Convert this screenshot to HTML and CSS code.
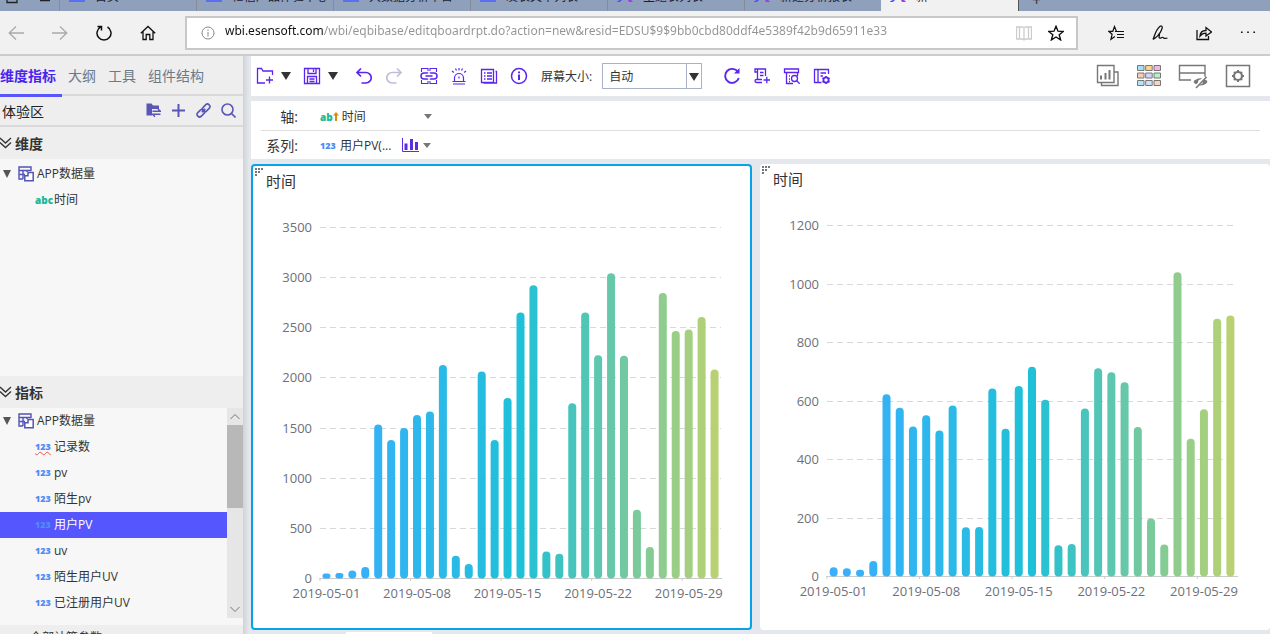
FILE: index.html
```html
<!doctype html>
<html lang="zh-CN">
<head>
	<meta charset="UTF-8">
	<title>APP数据量</title>
	<link rel="stylesheet" href="styles.css">
	<script src="chart.js" defer></script>
</head>
<body>
<svg class="defs" aria-hidden="true">
	<symbol id="i-table" viewBox="0 0 16 16">
		<path d="M5 13H1V1h12v4M1 4.500h12M1 8.500h6M5 4.500V13M9 4.500V6" fill="none" stroke="currentColor" stroke-width="1.400"/>
		<path d="M10 6.500h5.200v8.200H6.800v-5H10z" fill="#fff" stroke="currentColor" stroke-width="1.500"/>
	</symbol>
	<symbol id="i-fold" viewBox="0 0 12 12">
		<path d="M0 1l5.500 5L11 1M0 5.500l5.500 5 5.500-5" fill="none" stroke="currentColor" stroke-width="1.300"/>
	</symbol>
	<symbol id="i-drag" viewBox="0 0 8 8">
		<path d="M0 0h2v2H0zM3 0h2v2H3zM6 0h2v2H6zM0 3h2v2H0zM3 3h2v2H3zM0 6h2v2H0z" fill="currentColor"/>
	</symbol>
	<symbol id="i-page" viewBox="0 0 16 11">
		<path d="M0 0h16v2H0z" fill="#5b6ff5"/>
	</symbol>
	<symbol id="i-petal" viewBox="0 0 16 11">
		<path d="M0 1.500L2.500 0H5L3 2H0z" fill="#4a55ff"/><path d="M11 0h3l2 1.500-1 .5h-3z" fill="#9a3cf0"/>
	</symbol>
</svg>

<div class="tabs">
	<div class="tab first"><svg width="52" height="4"><path d="M7 0v2.500h10V0M40 .500h10" fill="none" stroke="#222" stroke-width="1.300"/></svg></div>
	<div class="tab"><svg class="fav"><use href="#i-page"/></svg><span>首页-</span></div>
	<div class="tab"><svg class="fav"><use href="#i-page"/></svg><span>亿信产品体验中心</span></div>
	<div class="tab"><svg class="fav"><use href="#i-page"/></svg><span>大数据分析平台</span></div>
	<div class="tab"><svg class="fav"><use href="#i-page"/></svg><span>发表文章列表</span></div>
	<div class="tab"><svg class="fav"><use href="#i-petal"/></svg><span>主题表列表</span></div>
	<div class="tab"><svg class="fav"><use href="#i-petal"/></svg><span>新建分析报表</span></div>
	<div class="tab on"><svg class="fav"><use href="#i-petal"/></svg><span>新</span></div>
	<div class="newtab">+</div>
</div>

<div class="browser">
	<div class="nav">
		<button aria-label="后退" class="dim"><svg width="16" height="16" viewBox="0 0 16 16"><path d="M16 8H1M8 1.500L1.200 8 8 14.500"/></svg></button>
		<button aria-label="前进" class="dim"><svg width="16" height="16" viewBox="0 0 16 16"><path d="M0 8h15M8 1.500L14.800 8 8 14.500"/></svg></button>
		<button aria-label="刷新"><svg width="16" height="16" viewBox="0 0 16 16"><path d="M4.500 2A7 7 0 1 0 11.500 2M1.500 1.500h4v4" stroke-width="1.500"/></svg></button>
		<button aria-label="主页"><svg width="16" height="16" viewBox="0 0 16 16"><path d="M.8 8.200L8 1.500l7.200 6.700M3 6.500v8h3.200V9.500h3.600v5H13v-8" stroke-width="1.300"/></svg></button>
	</div>
	<div class="address">
		<svg class="info" width="14" height="14" viewBox="0 0 14 14"><circle cx="7" cy="7" r="6"/><path d="M7 6v4.500M7 3.500V5"/></svg>
		<input class="url" type="text" aria-label="地址" value="wbi.esensoft.com/wbi/eqbibase/editqboardrpt.do?action=new&amp;resid=EDSU$9$9bb0cbd80ddf4e5389f42b9d65911e33">
		<button aria-label="阅读视图" class="faint"><svg width="16" height="16" viewBox="0 0 16 16"><path d="M.5 2h6L8 3l1.500-1h6v12h-6L8 15l-1.500-1h-6zM8 3v12M3.500 2v11.500M12.500 2v11.500"/></svg></button>
		<button aria-label="收藏"><svg width="16" height="16" viewBox="0 0 16 16"><path d="M8 1.300l2 4.900 5.200.3-4 3.300 1.400 5.100L8 12l-4.600 2.900 1.400-5.100-4-3.300 5.200-.3z" stroke-width="1.400"/></svg></button>
	</div>
	<div class="actions">
		<button aria-label="收藏夹"><svg width="16" height="16" viewBox="0 0 16 16"><path d="M8.500 6.500L6.500 1.500l-1.700 4.800H.7l3.400 3-1.200 5 4-2.700M7 6.500h9M9 9.500h7M9 12.500h7" stroke-width="1.200"/></svg></button>
		<button aria-label="笔记"><svg width="16" height="16" viewBox="0 0 16 16"><path d="M1 14.500L3.500 8C5 4 8 .5 9.500 1s.5 3-1 6-4.300 5.500-7.500 7.500M7 8.500c1.500 1-1 3.500.5 4.500s2-1.500 3.500-.5 2 1.500 4.500.5" stroke-width="1.300"/></svg></button>
		<button aria-label="共享"><svg width="16" height="16" viewBox="0 0 16 16"><path d="M1 5v9.500h11.500V11M4 11c.3-4 3-5.500 6-5.500V2.500L15.500 7 10 11V8.200C7 8.200 5.500 9 4 11z" stroke-width="1.300"/></svg></button>
		<button aria-label="更多"><svg width="16" height="16" viewBox="0 0 16 16"><path d="M1 7.300h1.600M7.200 7.300h1.600M13.400 7.300H15" stroke-width="1.600"/></svg></button>
	</div>
</div>

<div class="app">
	<div class="side">
		<div class="sidetabs">
			<a href="#" class="active">维度指标</a>
			<a href="#">大纲</a>
			<a href="#">工具</a>
			<a href="#">组件结构</a>
		</div>
		<div class="source">
			<span>体验区</span>
			<button aria-label="切换主题"><svg width="15" height="15" viewBox="0 0 15 15"><path d="M.5.500h5L7 2.500h6V6H6v6.500H.5z" fill="currentColor" stroke="none"/><path d="M6.500 8.200h8L12 6M14.500 11.200h-8L9 13.800" stroke-width="1.400"/></svg></button>
			<button aria-label="新建"><svg width="15" height="15" viewBox="0 0 15 15"><path d="M7.500 1v13M1 7.500h13" stroke-width="2"/></svg></button>
			<button aria-label="关联"><svg width="15" height="15" viewBox="0 0 15 15"><g transform="rotate(-45 7.500 7.500)"><rect x="-.5" y="5" width="8.500" height="5" rx="2.500"/><rect x="7" y="5" width="8.500" height="5" rx="2.500"/><path d="M5 7.500h5"/></g></svg></button>
			<button aria-label="搜索"><svg width="15" height="15" viewBox="0 0 15 15"><circle cx="6.500" cy="6.500" r="5.500"/><path d="M10.500 10.500l4 4"/></svg></button>
		</div>
		<div class="head"><svg width="12" height="12"><use href="#i-fold"/></svg>维度</div>
		<ul class="tree dims">
			<li class="root"><i class="tri"></i><svg width="16" height="16"><use href="#i-table"/></svg>APP数据量</li>
			<li><b class="abc">abc</b>时间</li>
		</ul>
		<div class="head"><svg width="12" height="12"><use href="#i-fold"/></svg>指标</div>
		<div class="scroll">
			<ul class="tree">
				<li class="root"><i class="tri"></i><svg width="16" height="16"><use href="#i-table"/></svg>APP数据量</li>
				<li><b class="num wavy">123</b>记录数</li>
				<li><b class="num">123</b>pv</li>
				<li><b class="num">123</b>陌生pv</li>
				<li class="sel"><b class="num">123</b>用户PV</li>
				<li><b class="num">123</b>uv</li>
				<li><b class="num">123</b>陌生用户UV</li>
				<li><b class="num">123</b>已注册用户UV</li>
			</ul>
			<div class="bar">
				<svg width="16" height="17" viewBox="0 0 16 17"><path d="M3.500 11L8 6.500l4.500 4.500"/></svg>
				<div class="thumb"></div>
				<svg width="16" height="17" viewBox="0 0 16 17"><path d="M3.500 6L8 10.500 12.500 6"/></svg>
			</div>
		</div>
		<div class="head last"><span>全部计算参数</span></div>
	</div>

	<div class="main">
		<div class="toolbar">
			<div class="drop">
				<button aria-label="新建"><svg width="18" height="18" viewBox="0 0 18 18"><path d="M9 16H1.500V1.500h4L7 4h9.500v4M10 13h7M13.500 9.500v7"/></svg></button>
				<button aria-label="新建选项" class="arrow"><i class="tri"></i></button>
			</div>
			<div class="drop">
				<button aria-label="保存"><svg width="18" height="18" viewBox="0 0 18 18"><path d="M1.500 1.500h15v15h-15zM5 1.500v5h8v-5M10.500 2.500V5M4.500 16.500v-7h9v7M6.500 12h5M6.500 14.500h5"/></svg></button>
				<button aria-label="保存选项" class="arrow"><i class="tri"></i></button>
			</div>
			<div class="set undo">
				<button aria-label="撤销"><svg width="18" height="18" viewBox="0 0 18 18"><path d="M6 1.500l-4 4 4 4M2 5.500h9a5 5 0 0 1 0 10.500H6.500" stroke-width="1.700"/></svg></button>
				<button aria-label="重做" class="off"><svg width="18" height="18" viewBox="0 0 18 18"><path d="M12 1.500l4 4-4 4M16 5.500H7A5 5 0 0 0 7 16h4.500" stroke-width="1.700"/></svg></button>
			</div>
			<div class="set tools">
				<button aria-label="联动"><svg width="18" height="18" viewBox="0 0 18 18"><path d="M8 4V1.500H1.500V5M10 4V1.500h6.500V5M8 14v2.500H1.500V13M10 14v2.500h6.500V13" stroke-width="1.100"/><path d="M7.500 6.500V6H4a3 3 0 0 0 0 6h3.500v-.5M10.500 6.500V6H14a3 3 0 0 1 0 6h-3.500v-.5M5.500 9h7" stroke-width="1.500"/></svg></button>
				<button aria-label="预警"><svg width="18" height="18" viewBox="0 0 18 18"><path d="M4.500 14V11a4.500 4.500 0 0 1 9 0v3M2.500 14.500h13M3 17h12M9 1v2.500M5.500 1.500l1 2M12.500 1.500l-1 2M2 4l1.800 1.500M16 4l-1.800 1.500M9 9.500v2" stroke-width="1.200"/></svg></button>
				<button aria-label="列表"><svg width="18" height="18" viewBox="0 0 18 18"><path d="M1.500 2.500h12v13h-12zM15.500 4.500h1V16H3.500M4 6h1.500M7 6h5M4 9h1.500M7 9h5M4 12h1.500M7 12h5"/></svg></button>
				<button aria-label="信息"><svg width="18" height="18" viewBox="0 0 18 18"><circle cx="9" cy="9" r="7.500" stroke-width="1.500"/><path d="M9 7.500V13M9 4.500v1.800" stroke-width="2"/></svg></button>
			</div>
			<label for="screen">屏幕大小:</label>
			<div class="select"><select id="screen"><option>自动</option></select></div>
			<div class="set">
				<button aria-label="刷新"><svg width="18" height="18" viewBox="0 0 18 18"><path d="M15 5a7 7 0 1 0 .8 6" stroke-width="1.900"/><path d="M16.500 1v5.500H11z" fill="currentColor" stroke="none"/></svg></button>
				<button aria-label="添加脚本"><svg width="18" height="18" viewBox="0 0 18 18"><path d="M4.500 5H2V2h10.500v7M4.500 2v10.500M9 15.500H3.500a1.500 1.500 0 0 1 0-3H9M7 5.500h3.500M7 8.500h3.500M10.500 13H17M13.800 9.800v6.400"/></svg></button>
				<button aria-label="预览"><svg width="18" height="18" viewBox="0 0 18 18"><path d="M3.500 5.500H1.500V2h14v3.500h-12V16.500H10M14.500 6v3M6 9h1M6 12h1M6 14.500h1"/><circle cx="11.500" cy="11.500" r="3"/><path d="M13.700 13.700l3 3"/></svg></button>
				<button aria-label="设置"><svg width="18" height="18" viewBox="0 0 18 18"><path d="M8.500 15.500h-7v-13h14V7M5 2.500v13M7.500 6H13M7.500 9H10"/><circle cx="13" cy="13" r="2.600" stroke-width="1.800"/><path d="M13 9v1.500M13 15.500V17M9.500 11l1.300.8M15.200 14.200l1.300.8M9.500 15l1.300-.8M15.200 11.800l1.300-.8" stroke-width="1.600"/></svg></button>
			</div>
			<div class="right">
				<button aria-label="图表"><svg width="24" height="24" viewBox="0 0 24 24"><path d="M1.500 1.500h16.500v17H1.500zM18.500 8H22v13.500H5.500V19" stroke-width="1.400"/><path d="M5 15.500v-4M9.500 15.500V9M13.500 15.500V6" stroke-width="2"/></svg></button>
				<button aria-label="主题颜色"><svg class="palette" width="24" height="24" viewBox="0 0 24 24"><path fill="#a9dff5" d="M.5 1.500h6.500v5H.5z"/><path fill="#f8d98a" d="M8.700 1.500h6.500v5H8.700z"/><path fill="#f4b6e6" d="M17 1.500h6.500v5H17z"/><path fill="#f8cdb6" d="M.5 9h6.500v5H.5z"/><path fill="#d6d4fa" d="M8.700 9h6.500v5H8.700z"/><path fill="#b9f0cc" d="M17 9h6.500v5H17z"/><path fill="#b6e4f7" d="M.5 16.500h6.500v5H.5z"/><path fill="#cfe0fa" d="M8.700 16.500h6.500v5H8.700z"/><path fill="#f9d3c0" d="M17 16.500h6.500v5H17z"/></svg></button>
				<button aria-label="隐藏面板"><svg width="30" height="26" viewBox="0 0 30 26"><path d="M13 17H1.500V2.500H27V10H1.500M27 10v5" stroke-width="1.400"/><path d="M15.500 19c3-5 11-5 14 0-3 4.500-11 4.500-14 0z" fill="currentColor" stroke="none"/><circle cx="22.500" cy="19" r="2.400" fill="#fff" stroke="none"/><path d="M27 14L17 25" stroke="#fff" stroke-width="3"/><path d="M28.500 14L18 25" stroke-width="1.600"/></svg></button>
				<button aria-label="选项"><svg width="26" height="24" viewBox="0 0 26 24"><path d="M1.500 1.500h23v21h-23z" stroke-width="1.500"/><circle cx="13" cy="12" r="4" stroke-width="2.200"/><path d="M13 6v2M13 16v2M7 12h2M17 12h2M9 8l1.300 1.300M15.700 14.700L17 16M17 8l-1.300 1.300M10.300 14.700L9 16" stroke-width="2"/></svg></button>
			</div>
		</div>

		<div class="axes">
			<div class="axis">
				<span class="name">轴:</span><b class="abc">ab</b><svg class="sort" width="6" height="9" viewBox="0 0 6 9"><path d="M3 0l3 3.500H4V9H2V3.500H0z" fill="#dc8a10"/></svg><span class="val">时间</span><i class="caret"></i>
			</div>
			<div class="axis">
				<span class="name">系列:</span><b class="num">123</b><span class="val">用户PV(...</span><svg class="kind" width="17" height="14" viewBox="0 0 17 14"><path d="M.5 0v13.500H17" fill="none" stroke="#5b2be8"/><path d="M2.500 5.500h3V12h-3zM8 1h3v11H8zM13 4h3v8h-3z" fill="#5b2be8"/></svg><i class="caret"></i>
			</div>
		</div>

		<div class="board">
			<div class="card active">
				<h3>时间</h3>
				<svg class="drag"><use href="#i-drag"/></svg>
				<div class="chart" id="chart1"></div>
			</div>
			<div class="card">
				<h3>时间</h3>
				<svg class="drag"><use href="#i-drag"/></svg>
				<div class="chart" id="chart2"></div>
			</div>
		</div>
		<div class="sheets"><span class="sheet"></span></div>
	</div>
</div>
</body>
</html>
```
FILE: styles.css
```css
body,ul,h3{margin:0;padding:0;}
body{
	height:100vh;
	display:flex;
	flex-direction:column;
	overflow:hidden;
	font-family:"Open Sans","Noto Sans CJK SC",sans-serif;
	font-size:12px;
	color:#333;
	background:#e4e8ec;
}
*{box-sizing:border-box;}
li{list-style:none;}
a{text-decoration:none;}
svg{display:block;flex:none;}
button{
	display:block;
	padding:0;
	border:none;
	background:none;
	color:inherit;
	flex:none;
}
button svg{fill:none;stroke:currentColor;stroke-width:1.3;}
.defs{display:none;}

/* tab strip */
.tabs{
	height:11px;
	display:flex;
	overflow:hidden;
	background:#8fa0bc;
}
.tab{
	flex:0 0 137px;
	display:flex;
	gap:10px;
	padding-left:9px;
	border-left:1px solid #8a8a92;
	overflow:hidden;
	font-size:12px;
	line-height:16px;
	color:#1c2230;
}
.tab.first{flex-basis:59px;padding:0;border:none;}
.tab span{margin-top:-11px;}
.tab.on{background:#f1f1f1;border:none;}
.fav{width:16px;height:11px;}
.newtab{
	padding-left:13px;
	border-left:1px solid #555;
	font-size:16px;
	line-height:0;
}

/* address row */
.browser{
	flex:none;
	height:45px;
	display:flex;
	align-items:center;
	background:#f1f1f1;
	border-bottom:2px solid #ccc;
	color:#111;
}
.nav{
	display:flex;
	gap:28px;
	padding:0 29px 0 8px;
}
.dim{color:#aaa;}
.address{
	flex:1;
	height:34px;
	display:flex;
	align-items:center;
	gap:16px;
	padding:0 12px 0 14px;
	background:#fff;
	border:2px solid #c8c8c8;
}
.info{fill:none;stroke:#888;}
.url{
	flex:1;
	min-width:0;
	margin-left:-6px;
	padding:0 0 4px;
	border:none;
	outline:none;
	font:12px "Noto Sans",sans-serif;
	/* host dark, path grey */
	color:transparent;
	background:linear-gradient(90deg,#111 98px,#939393 98px);
	-webkit-background-clip:text;
	background-clip:text;
}
.faint{color:#ccc;}
.actions{
	display:flex;
	gap:28px;
	padding:0 14px 0 30px;
}

.app{
	flex:1;
	min-height:0;
	display:flex;
}

/* sidebar */
.side{
	flex:0 0 243px;
	display:flex;
	flex-direction:column;
	overflow:hidden;
	background:#eee;
}
.sidetabs{
	flex:none;
	height:40px;
	display:flex;
	gap:12px;
	border-bottom:2px solid #d9d9d9;
	font-size:14px;
	line-height:40px;
}
.sidetabs a{color:#6b7a8b;height:41px;}
.sidetabs .active{
	padding-right:6px;
	margin-right:-6px;
	font-weight:bold;
	color:#4a25f0;
	border-bottom:3px solid #5855ff;
}
.source{
	flex:none;
	height:31px;
	display:flex;
	align-items:center;
	gap:10px;
	padding:0 7px 0 2px;
	border-bottom:2px solid #d9d9d9;
	font-size:14px;
	color:#222;
}
.source span{flex:1;}
.source button{color:#5957b5;}
.source svg{stroke-width:1.6;}
.head{
	flex:none;
	height:32px;
	display:flex;
	align-items:center;
	gap:3px;
	font-size:14px;
	font-weight:bold;
}
.tree li{
	height:26px;
	display:flex;
	align-items:center;
	padding-left:35px;
	line-height:26px;
}
.tree .root{padding-left:3px;}
.root svg{margin:0 3px 0 7px;color:#5354b4;}
.dims{
	flex:1;
	padding-top:2px;
	background:#f7f7f7;
}
.tri{
	border:4px solid transparent;
	border-top:8px solid #555;
	border-bottom:none;
}
.num,.abc{
	flex:0 0 19px;
	font-size:9px;
	font-weight:800;
	line-height:12px;
	color:#4e8cf8;
}
.abc{font-size:10px;color:#1bb895;}
.wavy{text-decoration:underline wavy #f05050 1px;}
.tree .sel{background:#5656ff;color:#fff;}
.scroll{
	flex:none;
	height:217px;
	display:flex;
	padding-bottom:7px;
	background:#f7f7f7;
}
.scroll ul{flex:1;}
.bar{
	width:16px;
	display:flex;
	flex-direction:column;
	background:#e6e6e6;
}
.bar svg{fill:none;stroke:#777;}
.thumb{height:83px;background:#b8b8b8;margin-bottom:auto;}
.last{
	height:9px;
	overflow:hidden;
	padding-left:30px;
	align-items:flex-start;
	font-size:12px;
	font-weight:normal;
	line-height:26px;
}

/* main */
.main{
	flex:1;
	min-width:0;
	display:flex;
	flex-direction:column;
	padding-left:8px;
	background:linear-gradient(90deg,#cfd2d6,#e4e8ec 6px);
}
.toolbar{
	flex:none;
	height:40px;
	display:flex;
	align-items:center;
	gap:12px;
	padding:0 19px 0 5px;
	background:#fff;
	color:#5a25ee;
}
.drop{display:flex;align-items:center;gap:7px;}
.arrow{width:10px;}
.arrow .tri{display:block;width:0;border-width:8px 5px 0;border-top-color:#333;}
.set{display:flex;gap:12px;}
.undo{padding:0 5px;}
.tools{margin-right:1px;}
.off{color:#c3bbdc;}
.toolbar label{color:#333;}
.select{
	position:relative;
	width:100px;
	margin:0 9px 0 -2px;
}
.select select{
	display:block;
	width:100%;
	height:26px;
	padding:0 6px;
	border:1px solid #a9b1c6;
	border-radius:0;
	background:#fff;
	appearance:none;
	font:inherit;
	color:#333;
}
.select:after{
	content:"";
	position:absolute;
	right:3px;
	top:10px;
	border:5px solid transparent;
	border-top:8px solid #333;
	border-bottom:none;
	pointer-events:none;
}
.select:before{
	content:"";
	position:absolute;
	right:15px;
	top:0;
	height:26px;
	border-left:1px solid #a9b1c6;
	pointer-events:none;
}
.right{
	display:flex;
	align-items:center;
	gap:17px;
	margin-left:auto;
	color:#777;
}
.palette{stroke-width:1;}

.axes{
	flex:none;
	margin:5px 0 5px;
	padding:1px 10px 0;
	background:#fff;
}
.axis{
	height:28px;
	display:flex;
	align-items:center;
}
.axis:first-child{height:29px;border-bottom:1px solid #ddd;}
.name{
	width:37px;
	margin-right:22px;
	text-align:right;
	font-size:14px;
}
.axis .num,.axis .abc{flex-basis:20px;padding-top:2px;}
.axis .abc{flex-basis:12px;}
.sort{margin-right:3px;}
.val{flex:0 0 82px;}
.axis:last-child .val{flex-basis:62px;}
.kind{margin-right:4px;}
.caret{
	border:4px solid transparent;
	border-top:5px solid #777;
	border-bottom:none;
}

/* cards */
.board{
	flex:1;
	min-height:0;
	display:grid;
	grid-template-columns:501fr 510fr;
	gap:8px;
}
.card{
	position:relative;
	display:flex;
	flex-direction:column;
	min-width:0;
	min-height:0;
	background:#fff;
	border-radius:4px;
}
.card.active{border:2px solid #06a3e6;}
.card h3{
	flex:none;
	height:30px;
	padding-left:13px;
	font-size:15px;
	font-weight:normal;
	line-height:30px;
}
.drag{
	position:absolute;
	left:2px;
	top:2px;
	width:8px;
	height:8px;
	color:#777;
}
.chart{flex:1;min-height:0;overflow:hidden;}
.chart text{font-size:13px;fill:#6e7079;}
.grid{stroke:#d8d8d8;stroke-dasharray:6 4;}
.base{stroke:#ccc;}
.sheets{
	flex:none;
	height:4px;
	display:flex;
	padding:2px 0 0 95px;
}
.sheet{width:86px;background:#fff;}
```
FILE: chart.js
```js
var NS='http://www.w3.org/2000/svg';
var stops=[[51,171,255],[22,190,214],[181,207,109]];

var charts=[
	{id:'chart1',max:3500,step:500,right:29,bottom:50,data:[50,55,80,115,1535,1380,1500,1630,1665,2128,228,144,2065,1382,1800,2653,2923,270,247,1748,2653,2225,3045,2220,685,313,2846,2468,2483,2607,2085]},
	{id:'chart2',max:1200,step:200,right:33,bottom:54,data:[32,28,23,53,623,577,513,551,499,585,168,169,643,505,651,717,604,107,111,574,712,698,664,511,198,109,1040,471,572,881,892]}
];

function add(parent,name,attrs,text){
	var el=document.createElementNS(NS,name);
	for(var k in attrs){
		el.setAttribute(k,attrs[k]);
	}
	if(text!==undefined){
		el.textContent=text;
	}
	parent.appendChild(el);
	return el;
}

function color(t){
	var n=t<0.5?0:1;
	var f=t*2-n;
	var c=[];
	for(var i=0;i<3;i++){
		c.push(Math.round(stops[n][i]+(stops[n+1][i]-stops[n][i])*f));
	}
	return 'rgb('+c.join(',')+')';
}

function draw(opt){
	var box=document.getElementById(opt.id);
	box.innerHTML='';
	var w=box.clientWidth,h=box.clientHeight;
	var left=67,top=31,x2=w-opt.right,bottom=h-opt.bottom;
	var svg=add(box,'svg',{width:w,height:h});

	for(var v=0;v<=opt.max;v+=opt.step){
		var y=Math.round(bottom-(bottom-top)*v/opt.max)+0.5;
		if(v>0){
			add(svg,'line',{x1:left,y1:y,x2:x2,y2:y,'class':'grid'});
		}
		add(svg,'text',{x:left-8,y:y+4,'text-anchor':'end'},v);
	}
	add(svg,'line',{x1:left-1,y1:bottom+0.5,x2:x2+1,y2:bottom+0.5,'class':'base'});

	var band=(x2-left)/opt.data.length;
	for(var i=0;i<opt.data.length;i++){
		var cx=left+band*(i+0.5);
		var bh=(bottom-top)*opt.data[i]/opt.max;
		add(svg,'rect',{x:cx-4,y:bottom+0.5-bh,width:8,height:bh,rx:Math.min(4,bh/2),fill:color(i/30),'fill-opacity':0.96});
		if(i%7==0){
			add(svg,'line',{x1:left+band*i,y1:bottom,x2:left+band*i,y2:bottom+3,'class':'base'});
			add(svg,'text',{x:cx,y:bottom+20,'text-anchor':'middle'},'2019-05-'+('0'+(i+1)).slice(-2));
		}
	}
}

drawAll();
window.onresize=drawAll;

function drawAll(){
	charts.forEach(draw);
}
```
